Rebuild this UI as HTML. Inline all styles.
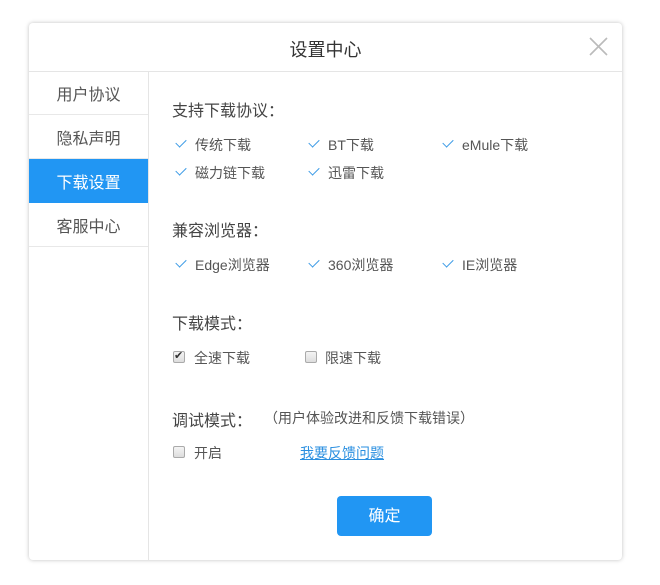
<!DOCTYPE html>
<html><head><meta charset="utf-8"><style>
*{margin:0;padding:0;box-sizing:border-box}
body{width:660px;height:585px;background:#fff;font-family:"Liberation Sans","Microsoft YaHei","Noto Sans CJK SC",sans-serif;color:#555;position:relative;overflow:hidden}
.dlg{position:absolute;left:29px;top:23px;width:593px;height:537px;border-radius:4px;background:#fff;box-shadow:0 0 4px rgba(0,0,0,.25)}
.a{position:absolute;white-space:nowrap}
.t{font-size:18px;color:#333}
.h{font-size:16px;color:#444}
.i{font-size:14px;color:#555}
.ck{position:absolute;width:10px;height:6px;border-left:1.5px solid #3a9ae6;border-bottom:1.5px solid #3a9ae6;transform:rotate(-45deg)}
.cb{position:absolute;width:12px;height:12px;border:1px solid #aaa;border-radius:2px;background:linear-gradient(#f4f4f4,#ddd)}
.nav{position:absolute;left:0;width:119px;height:44px;line-height:44px;padding-top:3px;text-align:center;font-size:16px;color:#555;border-bottom:1px solid #e8e8e8}
</style></head><body>
<div class="dlg">
<div class="a t" style="left:0;width:593px;text-align:center;top:13px">设置中心</div>
<svg class="a" style="left:559px;top:13px" width="21" height="21"><path d="M2 2L19 19M19 2L2 19" stroke="#bbb" stroke-width="1.6"/></svg>
<div class="a" style="left:0;top:48px;width:593px;height:1px;background:#e5e5e5"></div>
<div class="a" style="left:119px;top:48px;width:1px;height:489px;background:#e5e5e5"></div>
<div class="nav" style="top:48px">用户协议</div>
<div class="nav" style="top:92px">隐私声明</div>
<div class="nav" style="top:136px;background:#2196f3;color:#fff;border-color:#2196f3">下载设置</div>
<div class="nav" style="top:180px">客服中心</div>
</div>
<div class="a h" style="left:172px;top:97px">支持下载协议：</div>
<div class="ck" style="left:176px;top:139px"></div><div class="a i" style="left:195px;top:135px">传统下载</div>
<div class="ck" style="left:309px;top:139px"></div><div class="a i" style="left:328px;top:135px">BT下载</div>
<div class="ck" style="left:443px;top:139px"></div><div class="a i" style="left:462px;top:135px">eMule下载</div>
<div class="ck" style="left:176px;top:167px"></div><div class="a i" style="left:195px;top:163px">磁力链下载</div>
<div class="ck" style="left:309px;top:167px"></div><div class="a i" style="left:328px;top:163px">迅雷下载</div>
<div class="a h" style="left:172px;top:217px">兼容浏览器：</div>
<div class="ck" style="left:176px;top:259px"></div><div class="a i" style="left:195px;top:255px">Edge浏览器</div>
<div class="ck" style="left:309px;top:259px"></div><div class="a i" style="left:328px;top:255px">360浏览器</div>
<div class="ck" style="left:443px;top:259px"></div><div class="a i" style="left:462px;top:255px">IE浏览器</div>
<div class="a h" style="left:172px;top:310px">下载模式：</div>
<div class="cb" style="left:173px;top:351px"></div><div class="a" style="left:174px;top:349px;font-size:11px;color:#333">✔</div>
<div class="a i" style="left:194px;top:348px">全速下载</div>
<div class="cb" style="left:305px;top:351px"></div><div class="a i" style="left:325px;top:348px">限速下载</div>
<div class="a h" style="left:172px;top:407px">调试模式：</div>
<div class="a i" style="left:264px;top:408px">（用户体验改进和反馈下载错误）</div>
<div class="cb" style="left:173px;top:446px"></div><div class="a i" style="left:194px;top:443px">开启</div>
<div class="a i" style="left:300px;top:443px;color:#2a8fe0;text-decoration:underline">我要反馈问题</div>
<div class="a" style="left:337px;top:496px;width:95px;height:40px;border-radius:4px;background:#2196f3;color:#fff;font-size:16px;text-align:center;line-height:42px">确定</div>
</body></html>
